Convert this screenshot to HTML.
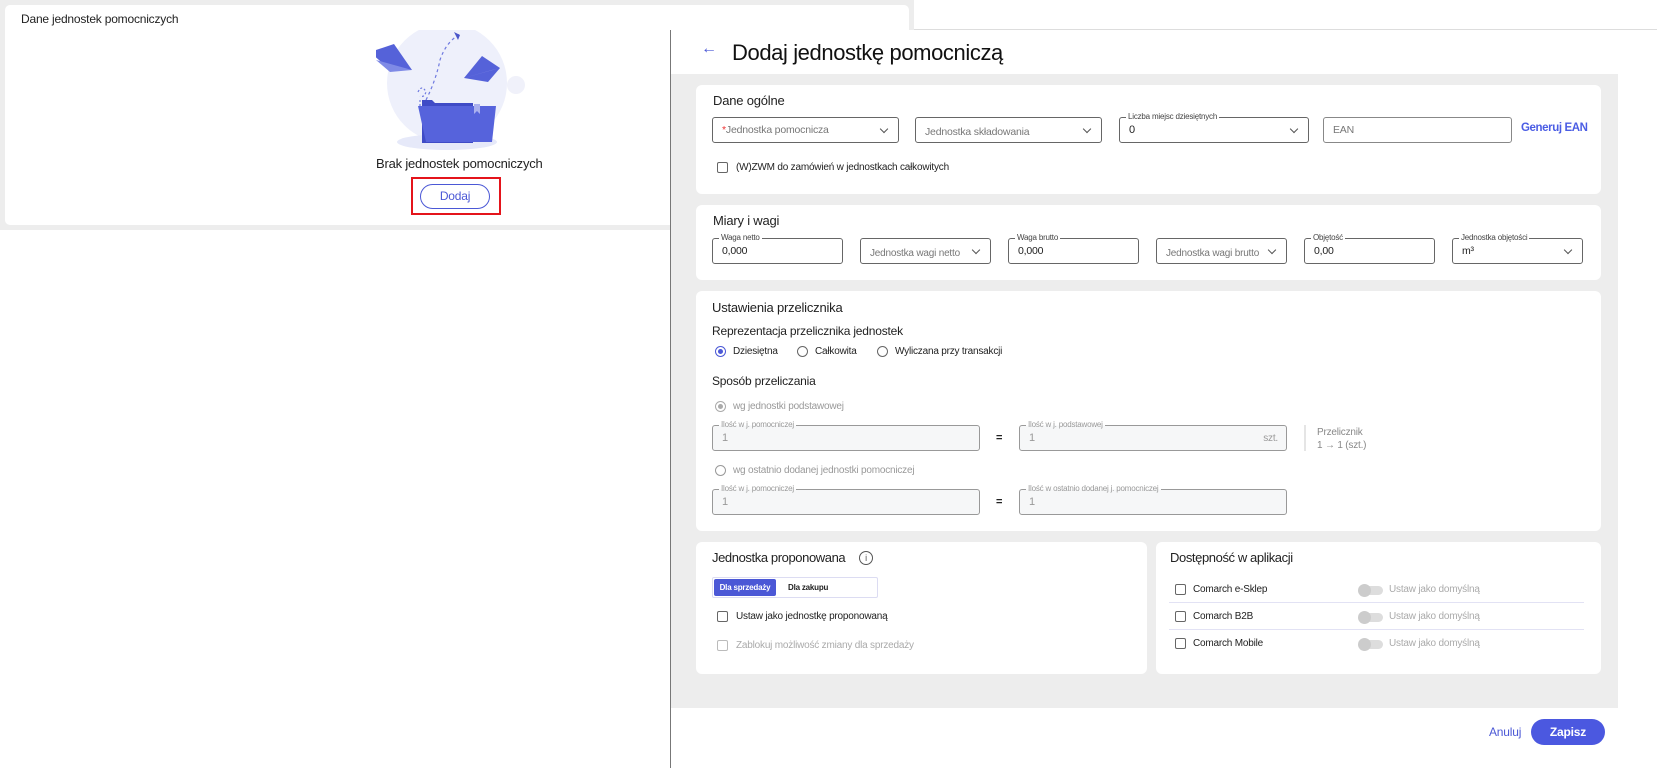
<!DOCTYPE html>
<html><head><meta charset="utf-8"><style>
*{box-sizing:border-box;margin:0;padding:0}
body{width:1657px;height:768px;position:relative;overflow:hidden;background:#fff;font-family:"Liberation Sans",sans-serif;color:#222;letter-spacing:-0.2px}
.a{position:absolute}
.card{position:absolute;background:#fff;border-radius:6px}
.f{position:absolute;height:26px;border:1px solid #666;border-radius:3px;font-size:11px;padding:0 9px;display:flex;align-items:center;color:#222}
.f.ph{color:#777}
.f.dis{background:#f6f7f8;border-color:#999;color:#999}
.lbl{position:absolute;top:-7px;left:6px;background:#fff;padding:0 2px;font-size:8px;color:#444;line-height:12px}
.f.dis .lbl{color:#999;background:linear-gradient(#fff 55%,#f6f7f8 55%)}
.chev{position:absolute;right:11px;top:8px;width:6px;height:6px;border-right:1.1px solid #555;border-bottom:1.1px solid #555;transform:rotate(45deg)}
.cb{position:absolute;width:11px;height:11px;border:1.3px solid #666;border-radius:2px}
.t{position:absolute;font-size:11px;white-space:nowrap;line-height:14px}
.h{position:absolute;font-size:14px;color:#222;white-space:nowrap}
.rad{position:absolute;width:11px;height:11px;border:1.2px solid #666;border-radius:50%}
.tog{position:absolute;width:24px;height:9px;border-radius:5px;background:#ddd}
.tog:before{content:"";position:absolute;left:-1px;top:-2px;width:13px;height:13px;border-radius:50%;background:#ccc}
</style></head><body>
<!-- left area -->
<div class="a" style="left:0;top:0;width:914px;height:230px;background:#ededed"></div>
<div class="card" style="left:5px;top:5px;width:904px;height:220px;border-radius:5px"></div>
<div class="t" style="left:21px;top:12px;font-size:12px;color:#222">Dane jednostek pomocniczych</div>
<svg class="a" style="left:376px;top:30px" width="160" height="180" viewBox="0 0 160 180">
<circle cx="71" cy="53" r="60" fill="#eef0fb"/>
<ellipse cx="71" cy="112" rx="50" ry="8" fill="#e6e9f9"/>
<circle cx="140" cy="55" r="9" fill="#f0f1fa"/>
<path d="M-6 22 L18 14 L36 40 L14 40 Z" fill="#5562d9"/>
<path d="M0 30 L36 40 L14 42 Z" fill="#7f8ae6"/>
<path d="M88 48 L106 26 L124 38 L112 52 Z" fill="#5562d9"/>
<path d="M88 48 L124 38 L116 40 Z" fill="#8891e6"/>
<path d="M50 70 Q60 50 64 30 Q70 12 84 4" stroke="#6f7ae0" stroke-width="1.2" fill="none" stroke-dasharray="3 3"/>
<path d="M78 2 l6 3 l-2 5z" fill="#4a55c9"/>
<path d="M42 62 q4 -8 8 0 q-2 6 -6 4" stroke="#6f7ae0" stroke-width="1.2" fill="none" stroke-dasharray="2 2"/>
<path d="M44 70 L44 80" stroke="#6f7ae0" stroke-width="1.2" stroke-dasharray="2 2"/>
<path d="M46 70 h10 l3 3 h38 v40 h-51 z" fill="#3f4bc6"/>
<path d="M42 76 h78 l-4 36 h-66 z" fill="#5663dc"/>
<path d="M98 74 v10 l3 -3 l3 3 v-10z" fill="#aab0ee"/>
</svg>
<div class="t" style="left:376px;top:157px;width:160px;text-align:center;font-size:13px;color:#222">Brak jednostek pomocniczych</div>
<div class="a" style="left:411px;top:177px;width:90px;height:38px;border:2px solid #e4141b"></div>
<div class="a" style="left:420px;top:184px;width:70px;height:25px;border:1px solid #4b58d6;border-radius:13px;font-size:12px;color:#4b58d6;text-align:center;line-height:23px">Dodaj</div>
<div class="a" style="left:914px;top:29px;width:743px;height:1px;background:#ddd"></div>

<!-- right panel -->
<div class="a" style="left:670px;top:30px;width:948px;height:738px;background:#fff;border-left:1px solid #777"></div>
<div class="a" style="left:671px;top:74px;width:947px;height:634px;background:#ededed"></div>
<div class="t" style="left:701px;top:42px;font-size:16px;color:#4b58d6">←</div>
<div class="t" style="left:732px;top:41px;font-size:22px;color:#111;letter-spacing:-0.4px;line-height:24px">Dodaj jednostkę pomocniczą</div>

<!-- card1 -->
<div class="card" style="left:696px;top:85px;width:905px;height:109px"></div>
<div class="h" style="left:713px;top:93px;font-size:13px">Dane ogólne</div>
<div class="f ph" style="left:712px;top:117px;width:187px;font-size:10.5px"><span style="color:#e33">*</span>Jednostka pomocnicza<i class="chev"></i></div>
<div class="f ph" style="left:915px;top:117px;width:187px;padding-top:4px;font-size:10.5px">Jednostka składowania<i class="chev"></i></div>
<div class="f" style="left:1119px;top:117px;width:190px"><span class="lbl">Liczba miejsc dziesiętnych</span>0<i class="chev"></i></div>
<div class="f ph" style="left:1323px;top:117px;width:189px;border-color:#888;font-size:10.5px">EAN</div>
<div class="t" style="left:1521px;top:121px;font-size:11.5px;color:#4b5de4;font-weight:bold;letter-spacing:-.4px">Generuj EAN</div>
<div class="cb" style="left:717px;top:162px"></div>
<div class="t" style="left:736px;top:161px;font-size:10px">(W)ZWM do zamówień w jednostkach całkowitych</div>

<!-- card2 -->
<div class="card" style="left:696px;top:205px;width:905px;height:75px"></div>
<div class="h" style="left:713px;top:213px;font-size:13px">Miary i wagi</div>
<div class="f" style="left:712px;top:238px;width:131px;font-size:10.5px"><span class="lbl">Waga netto</span>0,000</div>
<div class="f ph" style="left:860px;top:238px;width:131px;padding-top:5px;font-size:10px">Jednostka wagi netto<i class="chev"></i></div>
<div class="f" style="left:1008px;top:238px;width:131px;font-size:10.5px"><span class="lbl">Waga brutto</span>0,000</div>
<div class="f ph" style="left:1156px;top:238px;width:131px;padding-top:5px;font-size:10px">Jednostka wagi brutto<i class="chev"></i></div>
<div class="f" style="left:1304px;top:238px;width:131px;font-size:10.5px"><span class="lbl">Objętość</span>0,00</div>
<div class="f" style="left:1452px;top:238px;width:131px;font-size:10.5px"><span class="lbl">Jednostka objętości</span>m³<i class="chev"></i></div>

<!-- card3 -->
<div class="card" style="left:696px;top:291px;width:905px;height:240px"></div>
<div class="h" style="left:712px;top:300px;font-size:13px">Ustawienia przelicznika</div>
<div class="t" style="left:712px;top:324px;font-size:12px">Reprezentacja przelicznika jednostek</div>
<div class="rad" style="left:715px;top:346px;border-color:#4b58d6"></div><div class="a" style="left:718px;top:349px;width:5px;height:5px;border-radius:50%;background:#4b58d6"></div>
<div class="t" style="left:733px;top:345px;font-size:10px">Dziesiętna</div>
<div class="rad" style="left:797px;top:346px"></div><div class="t" style="left:815px;top:345px;font-size:10px">Całkowita</div>
<div class="rad" style="left:877px;top:346px"></div><div class="t" style="left:895px;top:345px;font-size:10px">Wyliczana przy transakcji</div>
<div class="t" style="left:712px;top:374px;font-size:12px">Sposób przeliczania</div>
<div class="rad" style="left:715px;top:401px;border-color:#aaa"></div><div class="a" style="left:718px;top:404px;width:5px;height:5px;border-radius:50%;background:#aaa"></div>
<div class="t" style="left:733px;top:400px;font-size:10px;color:#999">wg jednostki podstawowej</div>
<div class="f dis" style="left:712px;top:425px;width:268px"><span class="lbl">Ilość w j. pomocniczej</span>1</div>
<div class="t" style="left:996px;top:431px;font-weight:bold">=</div>
<div class="f dis" style="left:1019px;top:425px;width:268px"><span class="lbl">Ilość w j. podstawowej</span>1<span style="position:absolute;right:8px;font-size:10px">szt.</span></div>
<div class="a" style="left:1304px;top:425px;width:2px;height:26px;background:#e5e5e5"></div>
<div class="t" style="left:1317px;top:426px;font-size:10px;color:#888;line-height:13px">Przelicznik<br>1 → 1 (szt.)</div>
<div class="rad" style="left:715px;top:465px;border-color:#999"></div>
<div class="t" style="left:733px;top:464px;font-size:10px;color:#999">wg ostatnio dodanej jednostki pomocniczej</div>
<div class="f dis" style="left:712px;top:489px;width:268px"><span class="lbl">Ilość w j. pomocniczej</span>1</div>
<div class="t" style="left:996px;top:495px;font-weight:bold">=</div>
<div class="f dis" style="left:1019px;top:489px;width:268px"><span class="lbl">Ilość w ostatnio dodanej j. pomocniczej</span>1</div>

<!-- card4 -->
<div class="card" style="left:696px;top:542px;width:451px;height:132px"></div>
<div class="h" style="left:712px;top:550px;font-size:13px;letter-spacing:-0.4px">Jednostka proponowana</div>
<div class="a" style="left:859px;top:551px;width:14px;height:14px;border:1px solid #555;border-radius:50%;font-size:9px;text-align:center;line-height:12px;color:#555">i</div>
<div class="a" style="left:712px;top:577px;width:166px;height:21px;border:1px solid #dcdcf2;border-radius:2px"></div>
<div class="a" style="left:714px;top:579px;width:62px;height:17px;background:#4b58d6;border-radius:2px;color:#fff;font-size:8px;font-weight:bold;text-align:center;line-height:17px">Dla sprzedaży</div>
<div class="t" style="left:788px;top:581px;font-size:8px;font-weight:bold">Dla zakupu</div>
<div class="cb" style="left:717px;top:611px"></div>
<div class="t" style="left:736px;top:610px;font-size:10px">Ustaw jako jednostkę proponowaną</div>
<div class="cb" style="left:717px;top:640px;border-color:#bbb"></div>
<div class="t" style="left:736px;top:639px;font-size:10px;color:#aaa">Zablokuj możliwość zmiany dla sprzedaży</div>

<!-- card5 -->
<div class="card" style="left:1156px;top:542px;width:445px;height:132px"></div>
<div class="h" style="left:1170px;top:550px;font-size:13px;letter-spacing:-0.4px">Dostępność w aplikacji</div>
<div class="cb" style="left:1175px;top:584px"></div><div class="t" style="left:1193px;top:583px;font-size:10px">Comarch e-Sklep</div>
<div class="tog" style="left:1359px;top:586px"></div><div class="t" style="left:1389px;top:583px;font-size:10px;color:#aaa">Ustaw jako domyślną</div>
<div class="a" style="left:1169px;top:602px;width:415px;height:1px;background:#e2e2f4"></div>
<div class="cb" style="left:1175px;top:611px"></div><div class="t" style="left:1193px;top:610px;font-size:10px">Comarch B2B</div>
<div class="tog" style="left:1359px;top:613px"></div><div class="t" style="left:1389px;top:610px;font-size:10px;color:#aaa">Ustaw jako domyślną</div>
<div class="a" style="left:1169px;top:629px;width:415px;height:1px;background:#e2e2f4"></div>
<div class="cb" style="left:1175px;top:638px"></div><div class="t" style="left:1193px;top:637px;font-size:10px">Comarch Mobile</div>
<div class="tog" style="left:1359px;top:640px"></div><div class="t" style="left:1389px;top:637px;font-size:10px;color:#aaa">Ustaw jako domyślną</div>

<!-- footer -->
<div class="t" style="left:1489px;top:725px;font-size:12px;color:#4b58d6">Anuluj</div>
<div class="a" style="left:1531px;top:719px;width:74px;height:26px;border-radius:13px;background:#4b58e0;color:#fff;font-size:12px;font-weight:bold;text-align:center;line-height:26px">Zapisz</div>
</body></html>
